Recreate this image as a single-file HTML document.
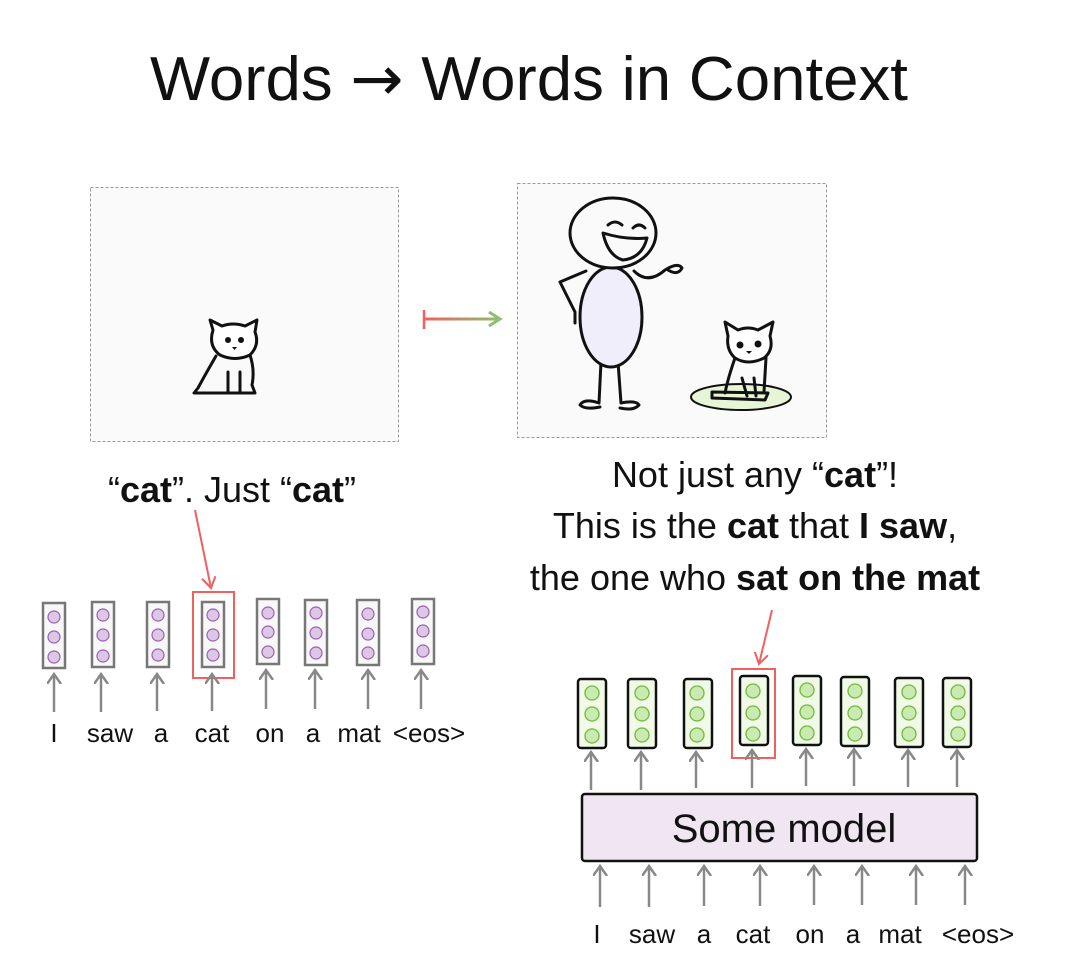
<!DOCTYPE html>
<html><head><meta charset="utf-8"><style>
html,body{margin:0;padding:0;background:#fff;}
svg{display:block;}
text{font-family:"Liberation Sans",sans-serif;}
</style></head><body>
<svg width="1074" height="976" viewBox="0 0 1074 976" xmlns="http://www.w3.org/2000/svg">
<defs>
<linearGradient id="g" gradientUnits="userSpaceOnUse" x1="424" y1="0" x2="500" y2="0"><stop offset="0" stop-color="#f06060"/><stop offset="1" stop-color="#8cc070"/></linearGradient>
<marker id="ga" markerWidth="14" markerHeight="16" refX="10" refY="7" orient="auto" markerUnits="userSpaceOnUse"><path d="M0,0 L10,7 L0,14" fill="none" stroke="#888" stroke-width="2.5"/></marker>
<marker id="ra" markerWidth="14" markerHeight="16" refX="11" refY="7" orient="auto" markerUnits="userSpaceOnUse"><path d="M0,0 L11,7 L0,14" fill="none" stroke="#f06060" stroke-width="2"/></marker>
</defs>
<text x="529" y="100" font-size="62" text-anchor="middle" textLength="758" lengthAdjust="spacingAndGlyphs" fill="#111">Words <tspan font-family="DejaVu Sans">→</tspan> Words in Context</text>

<rect x="90.5" y="187.5" width="308" height="254" fill="#fafafa" stroke="#999" stroke-dasharray="3,2"/>
<rect x="517.5" y="183.5" width="309" height="254" fill="#fafafa" stroke="#999" stroke-dasharray="3,2"/>

<!-- left cat -->
<g fill="none" stroke="#111" stroke-width="3" stroke-linecap="round" stroke-linejoin="round">
<path d="M213,330 L210,320 L222,326 Q233,322 245,326 L257,320 L255,332 Q260,345 250,355 Q235,362 220,355 Q208,346 213,330Z" fill="#fff"/>
<path d="M216,356 Q205,375 198,388 L194,393 L255,393 L252,385 Q255,370 250,355"/>
<path d="M228,372 L228,392 M240,372 L240,392"/>
</g>
<circle cx="228" cy="340" r="3" fill="#111"/><circle cx="241" cy="340" r="3" fill="#111"/>
<path d="M232,347 L237,347 L234.5,350Z" fill="#111"/>

<!-- mapping arrow -->
<line x1="424" y1="310" x2="424" y2="329" stroke="#f06060" stroke-width="2.5"/>
<rect x="424" y="317.5" width="75" height="3" fill="url(#g)"/>
<path d="M489,312 L500,319 L489,326" fill="none" stroke="#8cc070" stroke-width="3"/>

<!-- person -->
<g fill="none" stroke="#111" stroke-width="3" stroke-linecap="round" stroke-linejoin="round">
<path d="M586,271 L560,282 L575,312 L575,323"/>
<path d="M634,271 Q648,285 665,270 Q678,262 682,268 Q678,276 668,270"/>
<path d="M601,362 L599,403 Q584,398 580,405 Q585,410 600,407 M618,362 L621,403 Q636,400 639,405 Q634,411 620,408"/>
<ellipse cx="611" cy="317" rx="31" ry="50" fill="#f0eefa"/>
<ellipse cx="613" cy="233" rx="43" ry="35" fill="#fafafa"/>
<path d="M603,233 Q625,240 647,238 Q642,258 623,260 Q608,256 603,233Z"/>
<path d="M608,225 Q615,219 622,225 M633,228 Q639,222 645,228"/>
</g>
<!-- mat + cat -->
<ellipse cx="741" cy="397" rx="50" ry="13" fill="#e6f5d6" stroke="#111" stroke-width="2"/>
<g fill="none" stroke="#111" stroke-width="3" stroke-linecap="round" stroke-linejoin="round">
<path d="M728,336 L725,322 L738,330 Q748,326 758,330 L773,322 L770,336 Q774,350 764,358 Q748,366 735,358 Q726,350 728,336Z" fill="#fff"/>
<path d="M735,358 Q728,378 725,393 M766,358 L764,392"/>
<path d="M712,392 L768,393 L765,400 L712,398Z"/>
<path d="M742,378 L747,396 M754,378 L756,396"/>
</g>
<circle cx="740" cy="345" r="3.5" fill="#111"/><circle cx="758" cy="344" r="3.5" fill="#111"/>
<path d="M746,351 L752,351 L749,354Z" fill="#111"/>

<!-- captions -->
<text x="232" y="502" font-size="36" text-anchor="middle" fill="#111">“<tspan font-weight="bold">cat</tspan>”. Just “<tspan font-weight="bold">cat</tspan>”</text>
<text x="755" y="487" font-size="36" text-anchor="middle" fill="#111">Not just any “<tspan font-weight="bold">cat</tspan>”!</text>
<text x="755" y="538" font-size="36" text-anchor="middle" fill="#111">This is the <tspan font-weight="bold">cat</tspan> that <tspan font-weight="bold">I saw</tspan>,</text>
<text x="755" y="590" font-size="36" text-anchor="middle" fill="#111">the one who <tspan font-weight="bold">sat on the mat</tspan></text>

<!-- left vectors -->
<g stroke="#777" stroke-width="2.5">
<rect x="43" y="603" width="22" height="65" fill="#f8f8f8"/>
<rect x="92" y="602" width="22" height="65" fill="#f8f8f8"/>
<rect x="147" y="602" width="22" height="65" fill="#f8f8f8"/>
<rect x="202" y="602" width="22" height="65" fill="#f8f8f8"/>
<rect x="257" y="599" width="22" height="65" fill="#f8f8f8"/>
<rect x="305" y="600" width="22" height="65" fill="#f8f8f8"/>
<rect x="357" y="600" width="22" height="65" fill="#f8f8f8"/>
<rect x="412" y="599" width="22" height="65" fill="#f8f8f8"/>
</g>
<g fill="#dcc8e6" stroke="#9a5fb4" stroke-width="1.2">
<circle cx="54" cy="617" r="6"/><circle cx="54" cy="637" r="6"/><circle cx="54" cy="657" r="6"/>
<circle cx="103" cy="615" r="6"/><circle cx="103" cy="635" r="6"/><circle cx="103" cy="656" r="6"/>
<circle cx="158" cy="615" r="6"/><circle cx="158" cy="635" r="6"/><circle cx="158" cy="655" r="6"/>
<circle cx="213" cy="615" r="6"/><circle cx="213" cy="635" r="6"/><circle cx="213" cy="655" r="6"/>
<circle cx="268" cy="613" r="6"/><circle cx="268" cy="632" r="6"/><circle cx="268" cy="652" r="6"/>
<circle cx="316" cy="613" r="6"/><circle cx="316" cy="633" r="6"/><circle cx="316" cy="653" r="6"/>
<circle cx="368" cy="614" r="6"/><circle cx="368" cy="634" r="6"/><circle cx="368" cy="653" r="6"/>
<circle cx="423" cy="612" r="6"/><circle cx="423" cy="631" r="6"/><circle cx="423" cy="651" r="6"/>
</g>
<rect x="193" y="592" width="41" height="86" fill="none" stroke="#f06060" stroke-width="2"/>
<line x1="195" y1="510" x2="211" y2="588" stroke="#f06060" stroke-width="2" marker-end="url(#ra)"/>
<g stroke="#888" stroke-width="2.5" marker-end="url(#ga)">
<line x1="54" y1="712" x2="54" y2="674"/><line x1="101" y1="712" x2="101" y2="674"/>
<line x1="157" y1="711" x2="157" y2="674"/><line x1="212" y1="711" x2="212" y2="674"/>
<line x1="266" y1="709" x2="266" y2="670"/><line x1="315" y1="709" x2="315" y2="670"/>
<line x1="368" y1="709" x2="368" y2="670"/><line x1="421" y1="709" x2="421" y2="670"/>
</g>
<g font-size="26" text-anchor="middle" fill="#111">
<text x="54" y="742">I</text><text x="110" y="742">saw</text><text x="161" y="742">a</text><text x="212" y="742">cat</text><text x="270" y="742">on</text><text x="313" y="742">a</text><text x="359" y="742">mat</text><text x="429" y="742">&lt;eos&gt;</text>
</g>

<!-- right vectors -->
<g stroke="#111" stroke-width="2.5" fill="#f1fae6">
<rect x="578" y="679" width="28" height="69" rx="3"/>
<rect x="628" y="679" width="28" height="69" rx="3"/>
<rect x="684" y="679" width="28" height="69" rx="3"/>
<rect x="740" y="676" width="28" height="69" rx="3"/>
<rect x="793" y="676" width="28" height="69" rx="3"/>
<rect x="841" y="677" width="28" height="69" rx="3"/>
<rect x="895" y="678" width="28" height="69" rx="3"/>
<rect x="943" y="678" width="28" height="69" rx="3"/>
</g>
<g fill="#c9eab0" stroke="#72b83e" stroke-width="1.3">
<circle cx="592" cy="693" r="7"/><circle cx="592" cy="714" r="7"/><circle cx="592" cy="736" r="7"/>
<circle cx="642" cy="693" r="7"/><circle cx="642" cy="714" r="7"/><circle cx="642" cy="735" r="7"/>
<circle cx="697" cy="693" r="7"/><circle cx="697" cy="714" r="7"/><circle cx="697" cy="735" r="7"/>
<circle cx="753" cy="691" r="7"/><circle cx="753" cy="713" r="7"/><circle cx="753" cy="734" r="7"/>
<circle cx="807" cy="690" r="7"/><circle cx="807" cy="712" r="7"/><circle cx="807" cy="733" r="7"/>
<circle cx="855" cy="691" r="7"/><circle cx="855" cy="713" r="7"/><circle cx="855" cy="734" r="7"/>
<circle cx="909" cy="692" r="7"/><circle cx="909" cy="713" r="7"/><circle cx="909" cy="734" r="7"/>
<circle cx="958" cy="692" r="7"/><circle cx="958" cy="713" r="7"/><circle cx="958" cy="734" r="7"/>
</g>
<rect x="732" y="669" width="43" height="89" fill="none" stroke="#f06060" stroke-width="2"/>
<line x1="772" y1="610" x2="759" y2="664" stroke="#f06060" stroke-width="2" marker-end="url(#ra)"/>
<g stroke="#888" stroke-width="2.5" marker-end="url(#ga)">
<line x1="591" y1="790" x2="591" y2="752"/><line x1="641" y1="790" x2="641" y2="752"/>
<line x1="696" y1="788" x2="696" y2="752"/><line x1="752" y1="788" x2="752" y2="750"/>
<line x1="806" y1="786" x2="806" y2="749"/><line x1="854" y1="786" x2="854" y2="749"/>
<line x1="908" y1="787" x2="908" y2="750"/><line x1="957" y1="787" x2="957" y2="750"/>
</g>
<rect x="582" y="794" width="395" height="67" rx="3" fill="#efe6f2" stroke="#111" stroke-width="2.5"/>
<text x="784" y="842" font-size="40" text-anchor="middle" fill="#111">Some model</text>
<g stroke="#888" stroke-width="2.5" marker-end="url(#ga)">
<line x1="600" y1="907" x2="600" y2="866"/><line x1="649" y1="907" x2="649" y2="866"/>
<line x1="704" y1="906" x2="704" y2="866"/><line x1="760" y1="906" x2="760" y2="866"/>
<line x1="814" y1="905" x2="814" y2="866"/><line x1="862" y1="905" x2="862" y2="866"/>
<line x1="916" y1="905" x2="916" y2="866"/><line x1="965" y1="905" x2="965" y2="866"/>
</g>
<g font-size="26" text-anchor="middle" fill="#111">
<text x="597" y="943">I</text><text x="652" y="943">saw</text><text x="704" y="943">a</text><text x="753" y="943">cat</text><text x="810" y="943">on</text><text x="853" y="943">a</text><text x="900" y="943">mat</text><text x="978" y="943">&lt;eos&gt;</text>
</g>
</svg>
</body></html>
